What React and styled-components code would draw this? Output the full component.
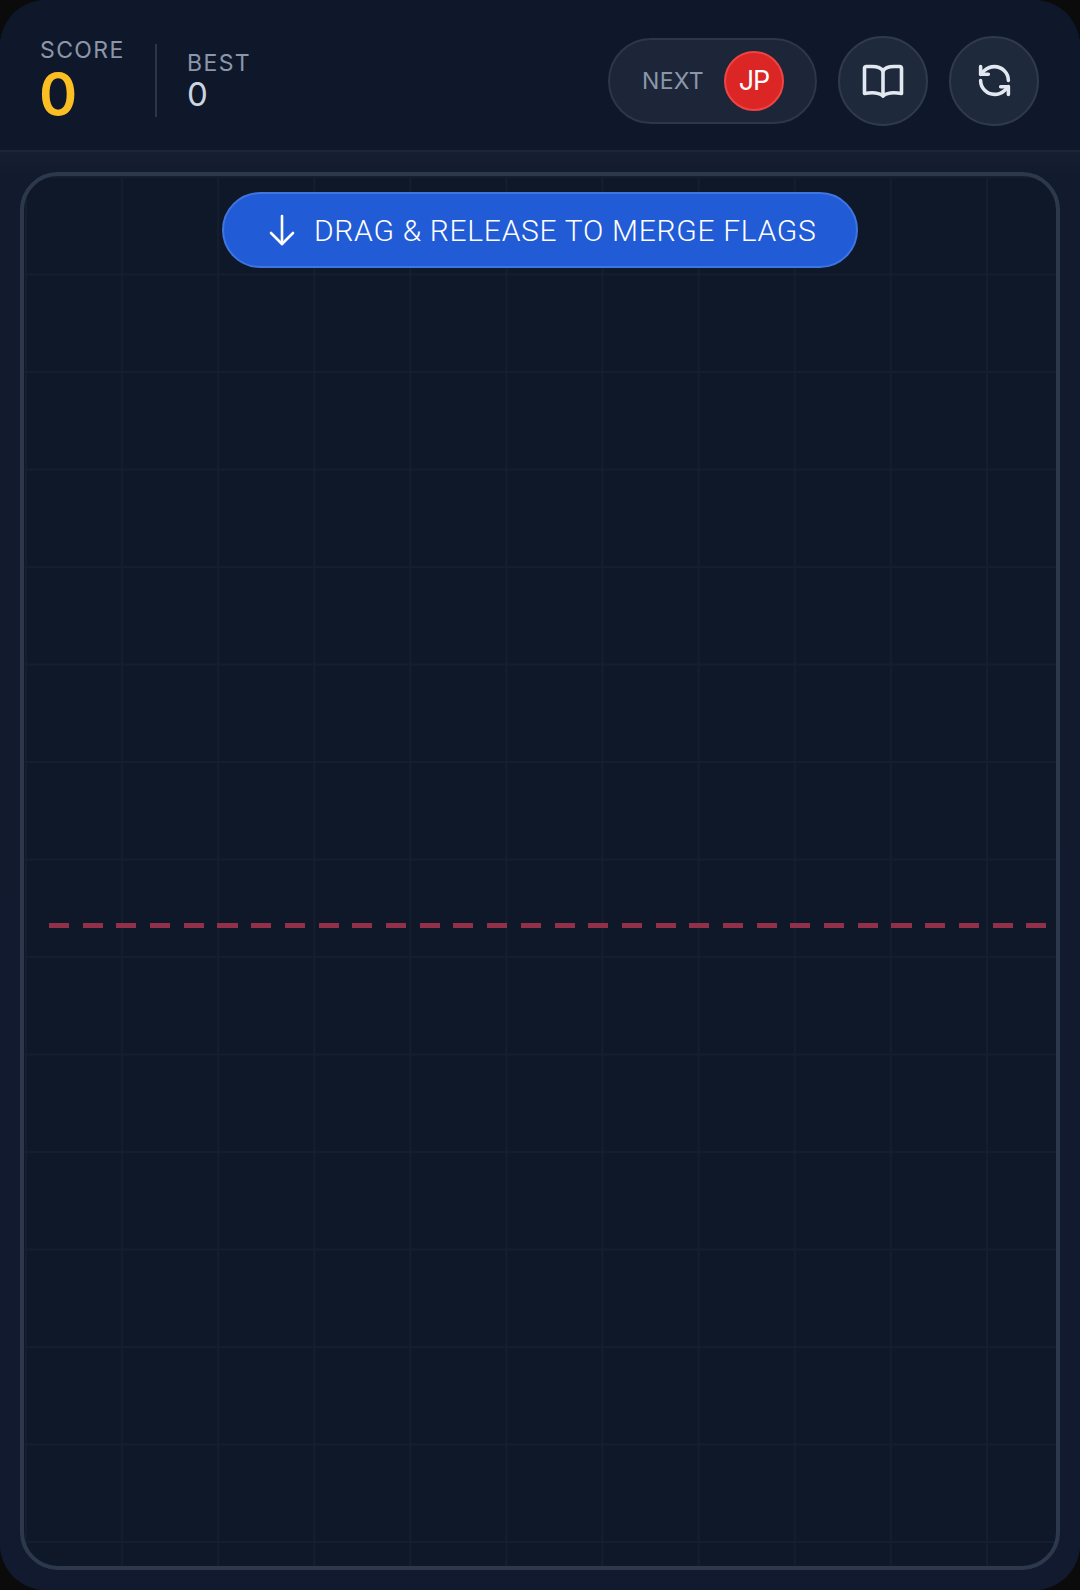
import React from "react";
import styled, { createGlobalStyle } from "styled-components";
import { RefreshCcw } from "lucide-react";

const GlobalStyle = createGlobalStyle`
  html, body {
    margin: 0;
    padding: 0;
    background: #0b0b0b;
  }
`;

export default function App() {
  return (
    <>
      <GlobalStyle />
      <Frame>
        <Header>
          <Scores>
            <ScoreBlock>
              <ScoreLabel>SCORE</ScoreLabel>
              <ScoreValue>0</ScoreValue>
            </ScoreBlock>
            <ScoreDivider />
            <BestBlock>
              <ScoreLabel>BEST</ScoreLabel>
              <BestValue>0</BestValue>
            </BestBlock>
          </Scores>
          <Actions>
            <NextPill>
              <NextLabel>NEXT</NextLabel>
              <NextFlag>JP</NextFlag>
            </NextPill>
            <RoundButton>
              <BookIcon />
            </RoundButton>
            <RoundButton>
              <RefreshCcw size={37} strokeWidth={2.3} />
            </RoundButton>
          </Actions>
        </Header>
        <Main>
          <Board>
            <HintPill>
              <HintArrow />
              <HintText>DRAG &amp; RELEASE TO MERGE FLAGS</HintText>
            </HintPill>
            <DangerLine />
          </Board>
        </Main>
      </Frame>
    </>
  );
}

function BookIcon() {
  return (
    <svg width="44" height="36" viewBox="0 0 44 36" fill="none" stroke="#e2e8f0" strokeWidth="3.6" strokeLinejoin="round" strokeLinecap="round">
      <path d="M22 8C20 4.5 16 3.5 11 3.5H5.5Q3.5 3.5 3.5 5.5V30.5C12 29 18 29.5 22 33C26 29.5 32 29 40.5 30.5V5.5Q40.5 3.5 38.5 3.5H33C28 3.5 24 4.5 22 8Z" />
      <path d="M22 8V33" />
    </svg>
  );
}

function HintArrow() {
  return (
    <svg width="26" height="32" viewBox="0 0 26 32" fill="none" stroke="#fff" strokeWidth="2.6" strokeLinejoin="round" strokeLinecap="round">
      <path d="M13 2V30" />
      <path d="M2 19L13 30L24 19" />
    </svg>
  );
}

const Frame = styled.div`
  width: 1080px;
  height: 1590px;
  display: flex;
  flex-direction: column;
  overflow: hidden;
  border-radius: 46px;
  background: #111a2e;
  font-family: Inter, "Liberation Sans", sans-serif;
`;

const Header = styled.header`
  flex: 0 0 152px;
  box-sizing: border-box;
  display: flex;
  align-items: center;
  justify-content: space-between;
  padding: 11px 41px 0 40px;
  background: #0f182b;
  border-bottom: 2px solid #1b2637;
`;

const Scores = styled.div`
  display: flex;
  align-items: center;
`;

const ScoreBlock = styled.div`
  display: flex;
  flex-direction: column;
  width: 115px;
`;

const BestBlock = styled.div`
  display: flex;
  flex-direction: column;
  padding-left: 30px;
`;

const ScoreLabel = styled.span`
  font-size: 23px;
  line-height: 26px;
  letter-spacing: 1.4px;
  color: #8b97a9;
`;

const ScoreValue = styled.span`
  font-size: 58px;
  line-height: 62px;
  font-weight: 600;
  margin-left: -1px;
  color: #fbbf24;
`;

const BestValue = styled.span`
  font-size: 33px;
  line-height: 36px;
  color: #cbd5e1;
`;

const ScoreDivider = styled.div`
  width: 2px;
  height: 73px;
  background: #2b3647;
`;

const Actions = styled.div`
  display: flex;
  align-items: center;
  gap: 21px;
`;

const NextPill = styled.div`
  box-sizing: border-box;
  width: 209px;
  height: 86px;
  display: flex;
  align-items: center;
  justify-content: space-between;
  padding: 0 31px 0 32px;
  border: 2px solid #2c3748;
  border-radius: 43px;
  background: #1c2638;
`;

const NextLabel = styled.span`
  font-size: 23px;
  letter-spacing: 0.3px;
  color: #8b97a9;
`;

const NextFlag = styled.div`
  box-sizing: border-box;
  width: 60px;
  height: 60px;
  display: flex;
  align-items: center;
  justify-content: center;
  border: 2px solid #ef4444;
  border-radius: 50%;
  background: #dc2626;
  color: #fff;
  font-size: 27px;
  letter-spacing: -1px;
`;

const RoundButton = styled.button`
  box-sizing: border-box;
  width: 90px;
  height: 90px;
  padding: 0;
  display: flex;
  align-items: center;
  justify-content: center;
  border: 2px solid #2f3a4c;
  border-radius: 50%;
  background: #1e293b;
  color: #e2e8f0;
`;

const Main = styled.main`
  flex: 1;
  display: flex;
  padding: 20px;
  background: linear-gradient(#151f30 0, #121a2e 26px, #111a2e 100%);
`;

const Board = styled.section`
  position: relative;
  flex: 1;
  box-sizing: border-box;
  display: flex;
  flex-direction: column;
  align-items: center;
  padding-top: 16px;
  border: 4px solid #2c394d;
  border-radius: 38px;
  background-color: #0f1828;
  background-image:
    linear-gradient(to right, #151e2e 2px, transparent 2px),
    linear-gradient(to bottom, #151e2e 2px, transparent 2px);
  background-size: 96.1px 97.5px;
  background-position: 1px 0;
`;

const HintPill = styled.div`
  box-sizing: border-box;
  width: 636px;
  height: 76px;
  display: flex;
  align-items: center;
  gap: 19px;
  padding-left: 45px;
  border: 2px solid #3f75e0;
  border-radius: 38px;
  background: #225bd6;
  color: #fff;
`;

const HintText = styled.span`
  font-family: Roboto, "Liberation Sans", sans-serif;
  font-size: 30px;
  font-weight: 300;
  letter-spacing: 0.7px;
  white-space: nowrap;
`;

const DangerLine = styled.div`
  position: absolute;
  left: 25px;
  right: 9px;
  top: 747px;
  height: 5px;
  filter: blur(0.4px);
  background: repeating-linear-gradient(to right, #933049 0, #933049 20px, transparent 20px, transparent 33.7px);
`;
